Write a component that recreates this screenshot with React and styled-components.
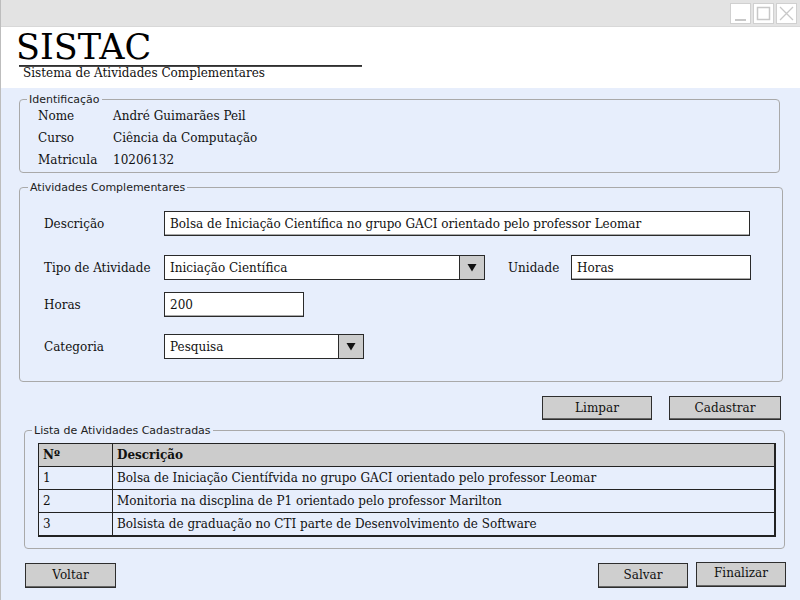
import React from "react";
import styled, { createGlobalStyle } from "styled-components";

const Global = createGlobalStyle`
  html, body { margin: 0; padding: 0; background: #e7eefc; }
  body { font-family: "DejaVu Serif", "Liberation Serif", serif; color: #111; }
  * { box-sizing: border-box; }
`;

const Window = styled.div`
  width: 800px;
  height: 600px;
  display: flex;
  flex-direction: column;
  overflow: hidden;
  border-left: 1px solid #bdbdbd;
`;

const TitleBar = styled.div`
  height: 27px;
  background: #e3e3e3;
  display: flex;
  justify-content: flex-end;
  align-items: center;
  gap: 2px;
  padding-right: 3px;
  border-bottom: 1px solid #d8d8d8;
`;

const WinBtn = styled.div`
  width: 21px;
  height: 21px;
  background: #fff;
  border: 1px solid #d0d0d0;
  display: flex;
  align-items: center;
  justify-content: center;
`;

const Header = styled.div`
  height: 61px;
  background: #fff;
  padding: 3px 0 0 15px;
  display: flex;
  flex-direction: column;
`;

const Title = styled.div`
  font-size: 35px;
  line-height: 34px;
  font-family: "DejaVu Serif", serif;
  color: #000;
`;

const TitleRule = styled.div`
  width: 343px;
  height: 2px;
  margin-top: 1px;
  margin-left: 3px;
  background: linear-gradient(to bottom, #222, #555);
`;

const Subtitle = styled.div`
  font-size: 12px;
  line-height: 13px;
  margin-left: 7px;
  margin-top: 0px;
`;

const Body = styled.div`
  flex: 1;
  background: #e7eefc;
  padding: 6px 20px 0 18px;
  display: flex;
  flex-direction: column;
`;

const Panel = styled.fieldset`
  margin: ${(p) => p.$mt || 0}px ${(p) => p.$mr || 0}px 0 ${(p) => p.$ml || 0}px;
  border: 1px solid #a9a9a9;
  border-radius: 4px;
  padding: 0;
  min-width: 0;
`;

const Legend = styled.legend`
  font-family: "DejaVu Sans", sans-serif;
  font-size: 11px;
  line-height: 11px;
  color: #222;
  padding: 0 2px 0 2px;
  margin-left: ${(p) => p.$ml || 7}px;
`;

const InfoGrid = styled.div`
  display: grid;
  grid-template-columns: 75px 1fr;
  grid-auto-rows: 21px;
  row-gap: 1px;
  align-items: center;
  font-size: 12px;
  padding: 0 0 2px 18px;
`;

const FormBody = styled.div`
  padding: 0 0 22px 24px;
`;

const FormRow = styled.div`
  display: flex;
  align-items: center;
  margin-top: ${(p) => p.$mt || 0}px;
  font-size: 12px;
`;

const Label = styled.div`
  width: ${(p) => p.$w || 120}px;
  margin-left: ${(p) => p.$ml || 0}px;
  flex: none;
`;

const Input = styled.div`
  width: ${(p) => p.$w}px;
  height: 25px;
  background: #fff;
  border: 1px solid #2a2a2a;
  box-shadow: inset 0 -0.5px 0 #555;
  display: flex;
  align-items: center;
  padding-left: 5px;
  font-size: 12px;
  white-space: nowrap;
  overflow: hidden;
`;

const Select = styled.div`
  width: ${(p) => p.$w}px;
  height: 25px;
  background: #fff;
  border: 1px solid #2a2a2a;
  display: flex;
  align-items: stretch;
  font-size: 12px;
`;

const SelectText = styled.div`
  flex: 1;
  display: flex;
  align-items: center;
  padding-left: 5px;
`;

const Arrow = styled.div`
  width: 25px;
  background: #cccccc;
  border-left: 1px solid #2a2a2a;
  display: flex;
  align-items: center;
  justify-content: center;
`;

const ButtonRow = styled.div`
  display: flex;
  justify-content: flex-end;
  gap: ${(p) => p.$gap || 0}px;
  margin-top: ${(p) => p.$mt || 0}px;
  margin-right: ${(p) => p.$mr || 0}px;
  align-items: center;
`;

const Button = styled.div`
  width: ${(p) => p.$w}px;
  height: ${(p) => p.$h || 24}px;
  background: #cfcfcf;
  border: 1px solid #2e2e2e;
  box-shadow: inset 0 -1px 0 #666;
  display: flex;
  align-items: center;
  justify-content: center;
  font-size: 12px;
  padding-bottom: ${(p) => p.$pb || 0}px;
  margin-top: ${(p) => p.$mt || 0}px;
`;

const Table = styled.table`
  width: 738px;
  margin-left: 13px;
  margin-top: ${(p) => p.$mt || 0}px;
  border-collapse: collapse;
  border: 1px solid #222;
  border-right-width: 2px;
  border-bottom-width: 2px;
  font-size: 12px;
  table-layout: fixed;
`;

const Th = styled.th`
  background: #cccccc;
  text-align: left;
  font-weight: bold;
  height: 23px;
  padding: 0 4px;
  border: 1px solid #222;
  width: ${(p) => (p.$w ? p.$w + "px" : "auto")};
`;

const Td = styled.td`
  height: 23px;
  padding: 0 4px;
  border: 1px solid #222;
  white-space: nowrap;
`;

const TableSpacer = styled.div`
  height: 11px;
`;

const Footer = styled.div`
  display: flex;
  justify-content: space-between;
  align-items: flex-start;
  margin-top: 13px;
  margin-left: 6px;
  margin-right: -6px;
`;

const FooterRight = styled.div`
  display: flex;
  gap: 8px;
  align-items: flex-start;
`;

const DownTri = () => (
  <svg width="10" height="9" viewBox="0 0 10 9">
    <polygon points="0.5,1 9.5,1 5,8.5" fill="#111" />
  </svg>
);

const rows = [
  ["1", "Bolsa de Iniciação Científvida no grupo GACI orientado pelo professor Leomar"],
  ["2", "Monitoria na discplina de P1 orientado pelo professor Marilton"],
  ["3", "Bolsista de graduação no CTI parte de Desenvolvimento de Software"],
];

export default function App() {
  return (
    <Window>
      <Global />
      <TitleBar>
        <WinBtn>
          <svg width="19" height="19" viewBox="0 0 19 19">
            <line x1="4" y1="16" x2="15" y2="16" stroke="#c8c8c8" strokeWidth="2" />
          </svg>
        </WinBtn>
        <WinBtn>
          <svg width="19" height="19" viewBox="0 0 19 19">
            <rect x="3.5" y="3.5" width="12" height="12" fill="none" stroke="#c8c8c8" strokeWidth="1.5" />
          </svg>
        </WinBtn>
        <WinBtn>
          <svg width="19" height="19" viewBox="0 0 19 19">
            <path d="M3 3 L16 16 M16 3 L3 16" stroke="#c8c8c8" strokeWidth="1.3" />
          </svg>
        </WinBtn>
      </TitleBar>
      <Header>
        <Title>SISTAC</Title>
        <TitleRule />
        <Subtitle>Sistema de Atividades Complementares</Subtitle>
      </Header>
      <Body>
        <Panel>
          <Legend>Identificação</Legend>
          <InfoGrid>
            <div>Nome</div>
            <div>André Guimarães Peil</div>
            <div>Curso</div>
            <div>Ciência da Computação</div>
            <div>Matricula</div>
            <div>10206132</div>
          </InfoGrid>
        </Panel>

        <Panel $mt={9} $mr={-3}>
          <Legend $ml={8}>Atividades Complementares</Legend>
          <FormBody>
            <FormRow $mt={18}>
              <Label>Descrição</Label>
              <Input $w={586}>Bolsa de Iniciação Científica no grupo GACI orientado pelo professor Leomar</Input>
            </FormRow>
            <FormRow $mt={19}>
              <Label>Tipo de Atividade</Label>
              <Select $w={321}>
                <SelectText>Iniciação Científica</SelectText>
                <Arrow>
                  <DownTri />
                </Arrow>
              </Select>
              <Label $w={63} $ml={23}>Unidade</Label>
              <Input $w={180}>Horas</Input>
            </FormRow>
            <FormRow $mt={12}>
              <Label>Horas</Label>
              <Input $w={140}>200</Input>
            </FormRow>
            <FormRow $mt={17}>
              <Label>Categoria</Label>
              <Select $w={200}>
                <SelectText>Pesquisa</SelectText>
                <Arrow>
                  <DownTri />
                </Arrow>
              </Select>
            </FormRow>
          </FormBody>
        </Panel>

        <ButtonRow $mt={14} $gap={17} $mr={-1}>
          <Button $w={110}>Limpar</Button>
          <Button $w={112}>Cadastrar</Button>
        </ButtonRow>

        <Panel $mt={5} $ml={5} $mr={-5}>
          <Legend $ml={7}>Lista de Atividades Cadastradas</Legend>
          <Table $mt={7}>
            <thead>
              <tr>
                <Th $w={74}>Nº</Th>
                <Th>Descrição</Th>
              </tr>
            </thead>
            <tbody>
              {rows.map((r) => (
                <tr key={r[0]}>
                  <Td>{r[0]}</Td>
                  <Td>{r[1]}</Td>
                </tr>
              ))}
            </tbody>
          </Table>
          <TableSpacer />
        </Panel>

        <Footer>
          <Button $w={91} $h={25} $mt={1}>Voltar</Button>
          <FooterRight>
            <Button $w={90} $h={25} $mt={1}>Salvar</Button>
            <Button $w={90} $h={25} $pb={3}>Finalizar</Button>
          </FooterRight>
        </Footer>
      </Body>
    </Window>
  );
}
